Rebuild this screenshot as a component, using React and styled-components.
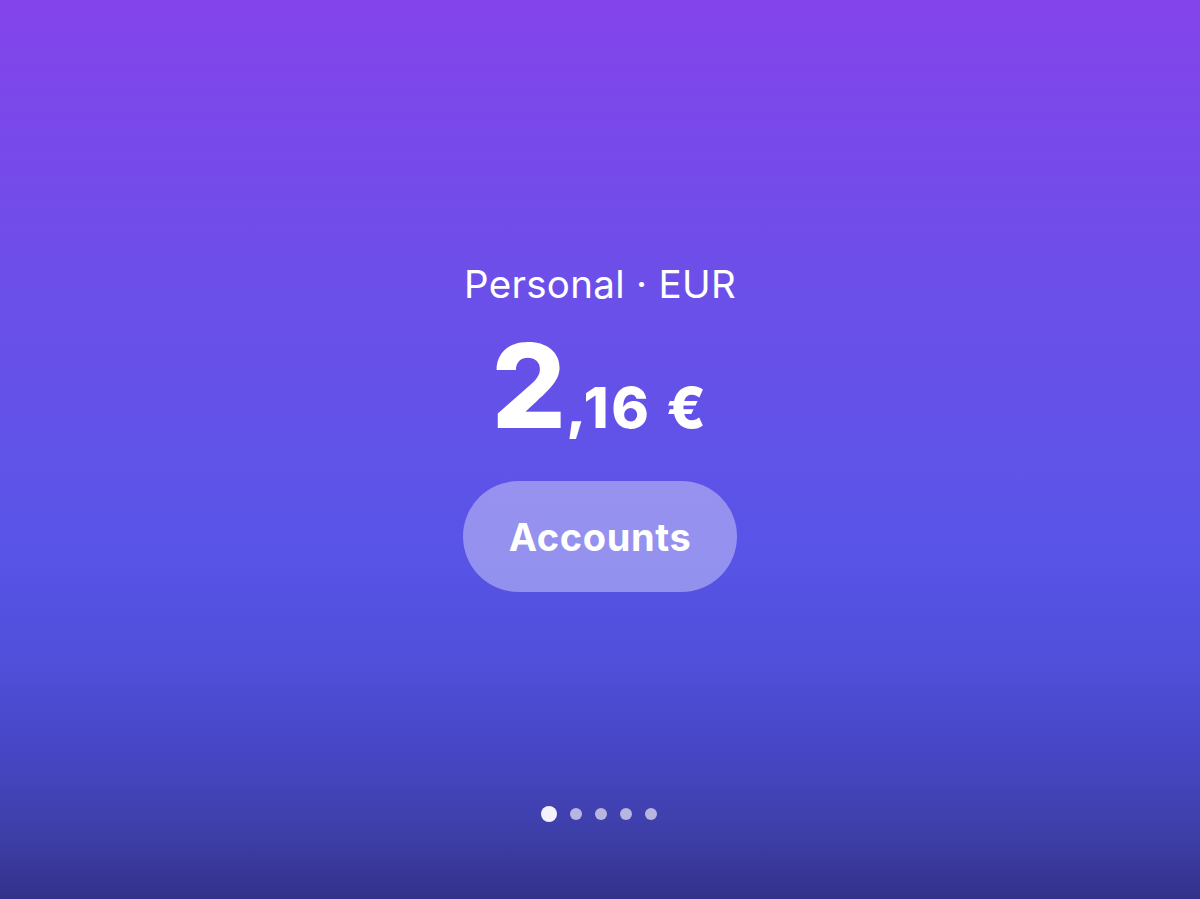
import styled, { createGlobalStyle } from "styled-components";

const GlobalStyle = createGlobalStyle`
  html, body {
    margin: 0;
    padding: 0;
  }
  body {
    font-family: Inter, "Noto Sans", sans-serif;
  }
`;

const Screen = styled.div`
  width: 100%;
  height: 899px;
  display: flex;
  flex-direction: column;
  align-items: center;
  background: linear-gradient(
    180deg,
    #8444eb 0%,
    #6a50e9 35%,
    #5854e7 62%,
    #4f4fd9 74%,
    #4646c4 84%,
    #3e3ea8 93%,
    #33318a 100%
  );
  overflow: hidden;
`;

const Balance = styled.div`
  display: flex;
  flex-direction: column;
  align-items: center;
  padding-top: 260px;
  flex: 1;
`;

const Label = styled.div`
  color: #ffffff;
  font-size: 38.5px;
  line-height: 48px;
  font-weight: 400;
  letter-spacing: 0.3px;
`;

const Amount = styled.div`
  display: flex;
  align-items: baseline;
  color: #ffffff;
  font-weight: 800;
  margin-top: 19px;
  line-height: 1;
`;

const Whole = styled.span`
  font-size: 117px;
  letter-spacing: 0;
`;

const Fraction = styled.span`
  font-size: 57px;
  letter-spacing: 2.5px;
`;

const PillButton = styled.button`
  margin-top: 37px;
  width: 274px;
  height: 111px;
  border: none;
  border-radius: 56px;
  background: rgba(255, 255, 255, 0.36);
  color: #ffffff;
  font-family: Inter, "Noto Sans", sans-serif;
  font-size: 38px;
  font-weight: 700;
  letter-spacing: 0.6px;
  cursor: pointer;
`;

const Pager = styled.div`
  display: flex;
  align-items: center;
  gap: 13px;
  padding-bottom: 77px;
  margin-right: 2px;
`;

const Dot = styled.span`
  width: ${(p) => (p.$active ? 16 : 12)}px;
  height: ${(p) => (p.$active ? 16 : 12)}px;
  border-radius: 50%;
  background: ${(p) => (p.$active ? "#f4f3fb" : "rgba(255, 255, 255, 0.62)")};
`;

export default function App() {
  return (
    <>
      <GlobalStyle />
      <Screen>
        <Balance>
          <Label>Personal · EUR</Label>
          <Amount>
            <Whole>2</Whole>
            <Fraction>,16 €</Fraction>
          </Amount>
          <PillButton>Accounts</PillButton>
        </Balance>
        <Pager>
          {[0, 1, 2, 3, 4].map((i) => (
            <Dot key={i} $active={i === 0} />
          ))}
        </Pager>
      </Screen>
    </>
  );
}
